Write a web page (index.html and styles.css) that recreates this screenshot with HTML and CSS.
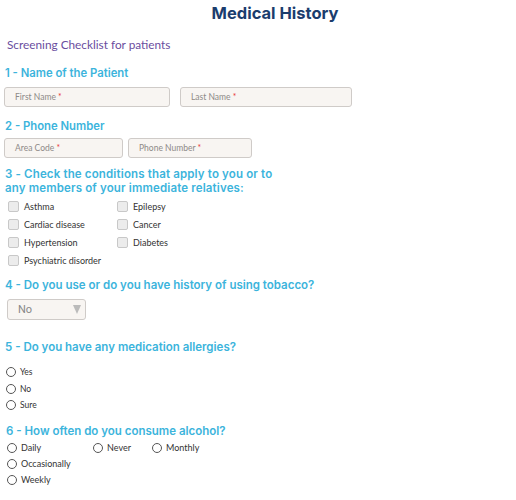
FILE: index.html
```html
<!DOCTYPE html>
<html>
<head>
<meta charset="utf-8">
<link rel="stylesheet" href="styles.css">
</head>
<body>
<div class="page">
  <h1 class="title">Medical History</h1>
  <p class="subtitle">Screening Checklist for patients</p>

  <h2 class="q q1">1 - Name of the Patient</h2>
  <div class="row">
    <div class="field w166">First Name <span class="req">*</span></div>
    <div class="field w172">Last Name <span class="req">*</span></div>
  </div>

  <h2 class="q q2">2 - Phone Number</h2>
  <div class="row row2">
    <div class="field w119">Area Code <span class="req">*</span></div>
    <div class="field w124">Phone Number <span class="req">*</span></div>
  </div>

  <h2 class="q q3">3 - Check the conditions that apply to you or to<br>any members of your immediate relatives:</h2>
  <div class="checks">
    <label class="chk"><span class="box"></span>Asthma</label>
    <label class="chk"><span class="box"></span>Epilepsy</label>
    <label class="chk"><span class="box"></span>Cardiac disease</label>
    <label class="chk"><span class="box"></span>Cancer</label>
    <label class="chk"><span class="box"></span>Hypertension</label>
    <label class="chk"><span class="box"></span>Diabetes</label>
    <label class="chk"><span class="box"></span>Psychiatric disorder</label>
  </div>

  <h2 class="q q4">4 - Do you use or do you have history of using tobacco?</h2>
  <div class="select"><span>No</span><span class="arrow"></span></div>

  <h2 class="q q5">5 - Do you have any medication allergies?</h2>
  <div class="radios r5">
    <label class="rad"><span class="circ"></span>Yes</label>
    <label class="rad"><span class="circ"></span>No</label>
    <label class="rad"><span class="circ"></span>Sure</label>
  </div>

  <h2 class="q q6">6 - How often do you consume alcohol?</h2>
  <div class="radios r6">
    <div class="radrow">
      <label class="rad daily"><span class="circ"></span>Daily</label>
      <label class="rad never"><span class="circ"></span>Never</label>
      <label class="rad"><span class="circ"></span>Monthly</label>
    </div>
    <label class="rad"><span class="circ"></span>Occasionally</label>
    <label class="rad"><span class="circ"></span>Weekly</label>
  </div>
</div>
</body>
</html>
```

FILE: styles.css
```css
* { box-sizing: border-box; }
html, body { margin: 0; padding: 0; background: #fff; }
.page {
  width: 516px;
  height: 500px;
  overflow: hidden;
  padding: 0 0 0 4px;
  font-family: "Lato", "Open Sans", sans-serif;
}
.title {
  margin: 0;
  padding: 2px 0 0 30px;
  text-align: center;
  font-family: "Inter", "Roboto", sans-serif;
  font-weight: 700;
  font-size: 16.5px;
  line-height: 22px;
  color: #1b3d6d;
}
.subtitle {
  margin: 14px 0 0 3px;
  font-family: "Lato", sans-serif;
  font-size: 11.8px;
  line-height: 14px;
  color: #6a4d9e;
}
.q {
  margin: 0;
  font-family: "Inter", "Roboto", sans-serif;
  font-weight: 600;
  font-size: 11.3px;
  line-height: 14px;
  color: #3cb4dc;
  padding-left: 1px;
}
.q1 { margin-top: 14px; }
.q2 { margin-top: 12px; }
.q3 { margin-top: 9px; font-size: 11.5px; letter-spacing: 0.15px; }
.q4 { margin-top: 9px; font-size: 11.5px; }
.q5 { margin-top: 20px; font-size: 11.5px; }
.q6 { margin-top: 10px; padding-left: 2px; font-size: 11.5px; }

.row { display: flex; gap: 10px; margin-top: 7px; }
.row2 { gap: 5px; margin-top: 5px; }
.field {
  height: 20px;
  border: 1px solid #cfcbc8;
  border-radius: 3px;
  background: #f8f5f2;
  font-size: 8.5px;
  line-height: 18px;
  color: #8e8a88;
  padding-left: 10px;
}
.w166 { width: 166px; }
.w172 { width: 172px; }
.w119 { width: 119px; }
.w124 { width: 124px; }
.req { color: #e8393b; }

.checks {
  display: grid;
  grid-template-columns: 109px auto;
  margin-top: 2px;
  padding-left: 4px;
}
.chk {
  display: flex;
  align-items: center;
  height: 18px;
  font-size: 9px;
  color: #333;
}
.box {
  width: 11px;
  height: 11px;
  border: 1px solid #c8c8c8;
  border-radius: 2px;
  background: #ececec;
  margin-right: 5px;
}

.select {
  position: relative;
  width: 79px;
  height: 21px;
  margin: 7px 0 0 3px;
  border: 1px solid #cfcbc8;
  border-radius: 3px;
  background: #f8f5f2;
  font-family: "Roboto", sans-serif;
  font-size: 11px;
  line-height: 19px;
  color: #888;
  padding-left: 10px;
}
.arrow {
  position: absolute;
  right: 4px;
  top: 5px;
  width: 0;
  height: 0;
  border-left: 4.5px solid transparent;
  border-right: 4.5px solid transparent;
  border-top: 9px solid #bbb;
}

.radios { display: flex; flex-direction: column; padding-left: 2px; }
.r5 { margin-top: 10px; }
.r6 { margin-top: 2px; padding-left: 3px; }
.radrow { display: flex; }
.rad {
  display: flex;
  align-items: center;
  height: 16.5px;
  font-size: 8.5px;
  color: #333;
}
.r6 .rad { height: 16px; font-size: 9px; }
.daily { width: 86px; }
.never { width: 59px; }
.circ {
  width: 10px;
  height: 10px;
  border: 1px solid #555;
  border-radius: 50%;
  background: #fff;
  margin-right: 4px;
}
```
